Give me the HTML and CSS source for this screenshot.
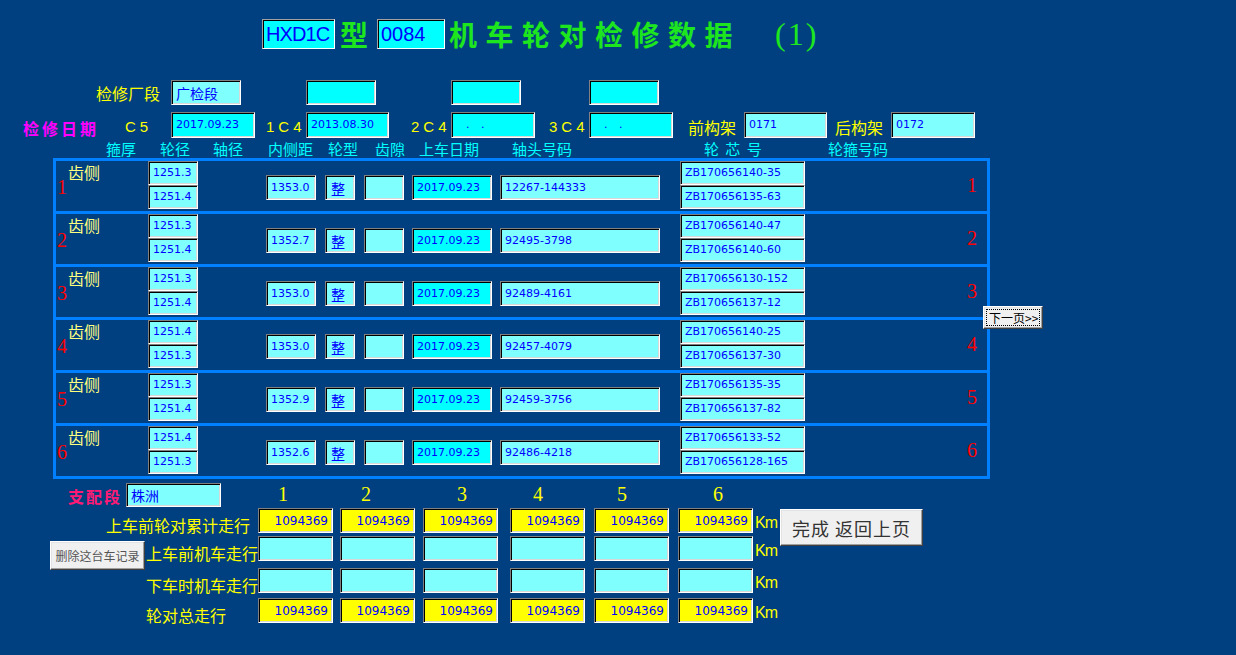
FILE: index.html
```html
<!DOCTYPE html>
<html lang="zh-CN">
<head>
<meta charset="utf-8">
<title>机车轮对检修数据</title>
<link rel="stylesheet" href="styles.css">
</head>
<body>
<div class="page">
  <div class="title-row">
    <div class="tbox hx">HXD1C</div>
    <div class="xing">型</div>
    <div class="tbox no">0084</div>
    <div class="ttl">机车轮对检修数据</div>
    <div class="paren">(1)</div>
  </div>

  <div class="row-a">
    <div class="lab la">检修厂段</div>
    <div class="bx lc cn ra">广检段</div>
    <div class="bx cy ra ra2"></div>
    <div class="bx cy ra ra3"></div>
    <div class="bx cy ra ra4"></div>
  </div>

  <div class="row-b">
    <div class="rq">检修日期</div>
    <div class="cc c5">C5</div>
    <div class="bx cy rb w84">2017.09.23</div>
    <div class="cc c1">1C4</div>
    <div class="bx cy rb w83">2013.08.30</div>
    <div class="cc c2">2C4</div>
    <div class="bx cy rb w84 dots">. .</div>
    <div class="cc c3">3C4</div>
    <div class="bx cy rb w84 dots">. .</div>
    <div class="lab gj q1">前构架</div>
    <div class="bx lc rb w83">0171</div>
    <div class="lab gj q2">后构架</div>
    <div class="bx lc rb w84">0172</div>
  </div>

  <div class="hdr">
    <span class="h h1">箍厚</span>
    <span class="h h2">轮径</span>
    <span class="h h3">轴径</span>
    <span class="h h4">内侧距</span>
    <span class="h h5">轮型</span>
    <span class="h h6">齿隙</span>
    <span class="h h7">上车日期</span>
    <span class="h h8">轴头号码</span>
    <span class="h h9">轮 芯 号</span>
    <span class="h">轮箍号码</span>
  </div>

  <div class="tbl">
    <div class="tr">
      <div class="rn">1</div><div class="side">齿侧</div>
      <div class="stack"><div class="bx lc sb">1251.3</div><div class="bx lc sb">1251.4</div></div>
      <div class="bx lc m1">1353.0</div><div class="bx lc cn m2">整</div><div class="bx lc m3"></div>
      <div class="bx cy m4">2017.09.23</div><div class="bx lc m5">12267-144333</div>
      <div class="stack zb"><div class="bx lc sb">ZB170656140-35</div><div class="bx lc sb">ZB170656135-63</div></div>
      <div class="rn rn2">1</div>
    </div>
    <div class="tr">
      <div class="rn">2</div><div class="side">齿侧</div>
      <div class="stack"><div class="bx lc sb">1251.3</div><div class="bx lc sb">1251.4</div></div>
      <div class="bx lc m1">1352.7</div><div class="bx lc cn m2">整</div><div class="bx lc m3"></div>
      <div class="bx cy m4">2017.09.23</div><div class="bx lc m5">92495-3798</div>
      <div class="stack zb"><div class="bx lc sb">ZB170656140-47</div><div class="bx lc sb">ZB170656140-60</div></div>
      <div class="rn rn2">2</div>
    </div>
    <div class="tr">
      <div class="rn">3</div><div class="side">齿侧</div>
      <div class="stack"><div class="bx lc sb">1251.3</div><div class="bx lc sb">1251.4</div></div>
      <div class="bx lc m1">1353.0</div><div class="bx lc cn m2">整</div><div class="bx lc m3"></div>
      <div class="bx cy m4">2017.09.23</div><div class="bx lc m5">92489-4161</div>
      <div class="stack zb"><div class="bx lc sb">ZB170656130-152</div><div class="bx lc sb">ZB170656137-12</div></div>
      <div class="rn rn2">3</div>
    </div>
    <div class="tr">
      <div class="rn">4</div><div class="side">齿侧</div>
      <div class="stack"><div class="bx lc sb">1251.4</div><div class="bx lc sb">1251.3</div></div>
      <div class="bx lc m1">1353.0</div><div class="bx lc cn m2">整</div><div class="bx lc m3"></div>
      <div class="bx cy m4">2017.09.23</div><div class="bx lc m5">92457-4079</div>
      <div class="stack zb"><div class="bx lc sb">ZB170656140-25</div><div class="bx lc sb">ZB170656137-30</div></div>
      <div class="rn rn2">4</div>
    </div>
    <div class="tr">
      <div class="rn">5</div><div class="side">齿侧</div>
      <div class="stack"><div class="bx lc sb">1251.3</div><div class="bx lc sb">1251.4</div></div>
      <div class="bx lc m1">1352.9</div><div class="bx lc cn m2">整</div><div class="bx lc m3"></div>
      <div class="bx cy m4">2017.09.23</div><div class="bx lc m5">92459-3756</div>
      <div class="stack zb"><div class="bx lc sb">ZB170656135-35</div><div class="bx lc sb">ZB170656137-82</div></div>
      <div class="rn rn2">5</div>
    </div>
    <div class="tr">
      <div class="rn">6</div><div class="side">齿侧</div>
      <div class="stack"><div class="bx lc sb">1251.4</div><div class="bx lc sb">1251.3</div></div>
      <div class="bx lc m1">1352.6</div><div class="bx lc cn m2">整</div><div class="bx lc m3"></div>
      <div class="bx cy m4">2017.09.23</div><div class="bx lc m5">92486-4218</div>
      <div class="stack zb"><div class="bx lc sb">ZB170656133-52</div><div class="bx lc sb">ZB170656128-165</div></div>
      <div class="rn rn2">6</div>
    </div>
  </div>

  <div class="bot">
    <div class="g1 dp"><span class="zp">支配段</span><div class="bx lc cn zz">株洲</div></div>
    <div class="g1 cn1 n1">1</div>
    <div class="g1 cn1 n2">2</div>
    <div class="g1 cn1 n3">3</div>
    <div class="g1 cn1 n4">4</div>
    <div class="g1 cn1 n5">5</div>
    <div class="g1 cn1 n6">6</div>

    <div class="g2 bl l1">上车前轮对累计走行</div>
    <div class="g2 bx yl kb">1094369</div>
    <div class="g2 bx yl kb">1094369</div>
    <div class="g2 bx yl kb">1094369</div>
    <div class="g2 bx yl kb">1094369</div>
    <div class="g2 bx yl kb">1094369</div>
    <div class="g2 bx yl kb">1094369</div>
    <div class="g2 km">Km</div>
    <button class="btn done">完成 返回上页</button>

    <div class="g3 bl l2"><button class="btn del">删除这台车记录</button><span class="lt">上车前机车走行</span></div>
    <div class="g3 bx lc kb"></div>
    <div class="g3 bx lc kb"></div>
    <div class="g3 bx lc kb"></div>
    <div class="g3 bx lc kb"></div>
    <div class="g3 bx lc kb"></div>
    <div class="g3 bx lc kb"></div>
    <div class="g3 km">Km</div>

    <div class="g4 bl l3">下车时机车走行</div>
    <div class="g4 bx lc kb"></div>
    <div class="g4 bx lc kb"></div>
    <div class="g4 bx lc kb"></div>
    <div class="g4 bx lc kb"></div>
    <div class="g4 bx lc kb"></div>
    <div class="g4 bx lc kb"></div>
    <div class="g4 km">Km</div>

    <div class="g5 bl l3">轮对总走行</div>
    <div class="g5 bx yl kb">1094369</div>
    <div class="g5 bx yl kb">1094369</div>
    <div class="g5 bx yl kb">1094369</div>
    <div class="g5 bx yl kb">1094369</div>
    <div class="g5 bx yl kb">1094369</div>
    <div class="g5 bx yl kb">1094369</div>
    <div class="g5 km">Km</div>
  </div>

  <button class="btn next"><span class="focus">下一页&gt;&gt;</span></button>
</div>
</body>
</html>
```

FILE: styles.css
```css
* { box-sizing: border-box; margin: 0; padding: 0; }
html, body { background: #004080; }
body {
  width: 1236px; height: 655px; overflow: hidden;
  font-family: "Noto Sans CJK SC", "Liberation Sans", sans-serif;
}
.page { position: relative; width: 1236px; height: 655px; padding-top: 19px; }

/* generic sunken box */
.bx {
  display: flex; align-items: center;
  border: 1px solid; border-color: #808080 #ffffff #ffffff #808080;
  box-shadow: inset 1px 1px 0 #000000, inset -1px -1px 0 #d8d8d8;
  color: #0000ff;
  font: 11px/14px "DejaVu Sans", sans-serif;
  padding-left: 4px; white-space: nowrap; overflow: hidden;
}
.bx.cn { font: 14px/16px "Noto Sans CJK SC", sans-serif; }
.lc { background: #80ffff; }
.cy { background: #00ffff; }
.yl { background: #ffff00; }

/* title */
.title-row { display: flex; align-items: center; height: 30px; padding-left: 262px; }
.tbox {
  height: 30px; display: flex; align-items: center; padding-left: 3px;
  border: 1px solid; border-color: #a0a0a0 #ffffff #ffffff #a0a0a0;
  box-shadow: inset 1px 1px 0 #000000;
  background: #00ffff; color: #0000ff;
  font: 20px/24px "Liberation Sans", sans-serif;
  white-space: nowrap; overflow: hidden;
}
.tbox.hx { width: 73px; letter-spacing: -0.9px; }
.tbox.no { width: 68px; margin-left: 5px; }
.xing { margin-left: 5px; width: 32px; color: #1ee61e; font: bold 28px/30px "Noto Sans CJK SC", sans-serif; }
.ttl { margin-left: 4px; width: 326px; color: #1ee61e; font: bold 28px/30px "Noto Sans CJK SC", sans-serif; letter-spacing: 8.5px; white-space: nowrap; }
.paren { color: #1ee61e; font: 32px/30px "Liberation Serif", serif; letter-spacing: 2px; }

/* row A */
.row-a { display: flex; align-items: center; height: 25px; margin-top: 31px; padding-left: 96px; }
.lab { color: #ffff00; font-size: 16px; line-height: 20px; white-space: nowrap; }
.la { width: 75px; }
.ra { width: 70px; height: 25px; }
.ra2 { margin-left: 65px; }
.ra3 { margin-left: 75px; }
.ra4 { margin-left: 68px; }

/* row B */
.row-b { display: flex; align-items: center; height: 26px; margin-top: 7px; padding-left: 23px; }
.rq { width: 101px; color: #ff00ff; font: bold 16px/20px "Noto Sans CJK SC", sans-serif; letter-spacing: 3px; padding-top: 6px; white-space: nowrap; }
.cc { color: #ffff00; font: 15px/18px "Liberation Sans", sans-serif; letter-spacing: 4px; padding-top: 4px; white-space: nowrap; }
.c5 { width: 47px; padding-left: 1px; }
.c1 { width: 40px; margin-left: 11px; }
.c2 { width: 40px; margin-left: 22px; }
.c3 { width: 40px; margin-left: 14px; }
.rb { height: 26px; }
.w83 { width: 83px; }
.w84 { width: 84px; }
.dots { padding-left: 14px; letter-spacing: 4px; }
.gj { padding-top: 4px; width: 56px; }
.q1 { margin-left: 15px; }
.q2 { margin-left: 8px; }

/* header labels */
.hdr { display: flex; height: 20px; padding-left: 106px; padding-top: 3px; }
.h { color: #00ffff; font-size: 15px; line-height: 16px; white-space: nowrap; }
.h1 { width: 54px; }
.h2 { width: 53px; }
.h3 { width: 55px; }
.h4 { width: 60px; }
.h5 { width: 47px; }
.h6 { width: 44px; }
.h7 { width: 93px; }
.h8 { width: 192px; }
.h9 { width: 124px; word-spacing: 3px; white-space: pre; }

/* table */
.tbl { margin-left: 53px; width: 937px; border: 3px solid #0080ff; }
.tr { display: flex; align-items: flex-start; height: 50px; }
.tr + .tr { border-top: 3px solid #0080ff; height: 53px; }
.rn { margin-left: 1px; width: 11px; margin-top: 14px; color: #ff0000; font: 20px/24px "Liberation Serif", serif; }
.rn2 { margin-left: 162px; margin-top: 12px; }
.side { width: 80px; margin-top: 1px; color: #ffff80; font-size: 16px; line-height: 20px; white-space: nowrap; }
.stack { display: flex; flex-direction: column; width: 50px; }
.stack.zb { width: 125px; margin-left: 20px; }
.sb { height: 24px; }
.m1, .m2, .m3, .m4, .m5 { margin-top: 14px; height: 25px; }
.m1 { margin-left: 68px; width: 50px; }
.m2 { margin-left: 9px; width: 30px; padding-left: 5px; }
.m3 { margin-left: 9px; width: 40px; }
.m4 { margin-left: 8px; width: 80px; }
.m5 { margin-left: 8px; width: 160px; }

/* bottom */
.bot {
  display: grid;
  grid-template-columns: 258px 82px 83px 87px 84px 84px 76px 26px 160px;
  grid-template-rows: 26px 28px 32px 30px 25px;
  margin-top: 3px;
}
.g1 { grid-row: 1; }
.g2 { grid-row: 2; }
.g3 { grid-row: 3; }
.g4 { grid-row: 4; }
.g5 { grid-row: 5; }
.dp { display: flex; align-items: center; padding-left: 68px; }
.zp { width: 58px; color: #ff1a75; font: bold 16px/20px "Noto Sans CJK SC", sans-serif; letter-spacing: 2px; padding-top: 2px; white-space: nowrap; }
.zz { width: 95px; height: 24px; }
.cn1 { color: #ffff00; font: 20px/24px "Liberation Serif", serif; }
.n1 { padding-left: 20px; }
.n2 { padding-left: 21px; }
.n3 { padding-left: 34px; }
.n4 { padding-left: 23px; }
.n5 { padding-left: 23px; }
.n6 { padding-left: 35px; }
.kb { width: 75px; height: 25px; justify-content: flex-end; padding-right: 4px; font: 12px/14px "DejaVu Sans", sans-serif; }
.bl { color: #ffff00; font-size: 16px; line-height: 18px; padding-top: 8px; white-space: nowrap; }
.l1 { padding-left: 106px; }
.l2 { display: flex; align-items: flex-start; padding-left: 50px; padding-top: 0; }
.l2 .lt { margin-left: 1px; padding-top: 8px; }
.l3 { padding-left: 146px; }
.km { color: #ffff00; font: 16px/18px "Liberation Sans", sans-serif; letter-spacing: -1px; padding-top: 6px; padding-left: 1px; }

.btn {
  background: #f0f0f0;
  border: 1px solid; border-color: #ffffff #404040 #404040 #ffffff;
  box-shadow: inset -1px -1px 0 #a0a0a0, inset 1px 1px 0 #e3e3e3;
  font-family: "Noto Sans CJK SC", sans-serif;
  white-space: nowrap;
}
.done {
  grid-row: 2 / span 2; grid-column: 9; align-self: start;
  width: 143px; height: 37px; margin-top: 1px;
  font-size: 18px; line-height: 20px; color: #333333; letter-spacing: 1px;
}
.del { width: 95px; height: 29px; margin-top: 5px; font-size: 12px; line-height: 14px; color: #555555; }
.next {
  position: absolute; left: 983px; top: 306px; width: 60px; height: 23px;
  font-size: 12px; line-height: 14px; color: #000000; padding: 2px;
}
.focus { display: block; height: 100%; border: 1px dotted #000000; line-height: 15px; text-align: left; padding-left: 2px; }
```
